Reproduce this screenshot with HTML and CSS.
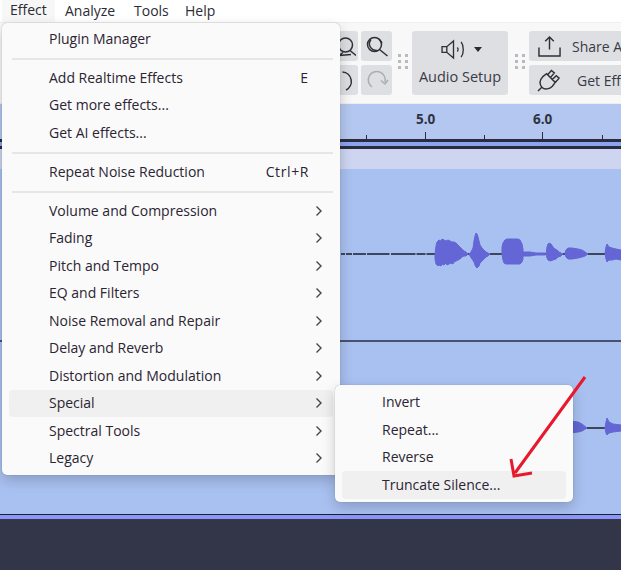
FILE: index.html
```html
<!DOCTYPE html>
<html lang="en">
<head>
<meta charset="utf-8">
<title>Effect menu</title>
<link rel="stylesheet" href="styles.css">
</head>
<body>
<div class="app">
  <nav class="menubar">
    <span class="top-item active">Effect</span>
    <span class="top-item">Analyze</span>
    <span class="top-item">Tools</span>
    <span class="top-item">Help</span>
  </nav>

  <div class="toolbar">
    <div class="tool-grid">
      <div class="tool-btn">
        <svg viewBox="0 0 26 26" class="ico"><circle cx="15.500" cy="12" r="7"/><path d="M20 17.500l6 5M9 22.500l12-1M9 22.500l4-3"/></svg>
      </div>
      <div class="tool-btn">
        <svg viewBox="0 0 26 26" class="ico"><circle cx="10.500" cy="11.500" r="7"/><path d="M15.500 16.500l8 6.500M7 6.500c-4 5 0 11 6 11M18 10l-3-4"/></svg>
      </div>
      <div class="tool-btn">
        <svg viewBox="0 0 26 26" class="ico"><path d="M12.500 5A9.500 9.500 0 0 1 16 23"/></svg>
      </div>
      <div class="tool-btn">
        <svg viewBox="0 0 26 26" class="ico faint"><path d="M8 20A8.500 8.500 0 1 1 21 15M17 13.500l4 3.500 3-4"/></svg>
      </div>
    </div>
    <div class="grip"><i></i><i></i><i></i><i></i><i></i><i></i></div>
    <div class="audio-setup">
      <div class="audio-icons">
        <svg viewBox="0 0 28 22" class="speaker"><path d="M2 8h5l7-6v18l-7-6H2zM7 8v6"/><path d="M18 9c1 1 1 3 0 4M22 3c3 4 3 12 0 16"/></svg>
        <span class="caret"></span>
      </div>
      <span class="audio-label">Audio Setup</span>
    </div>
    <div class="grip second"><i></i><i></i><i></i><i></i><i></i><i></i></div>
    <div class="wide-stack">
      <div class="wide-btn">
        <svg viewBox="0 0 26 24" class="wide-ico"><path d="M13 15V2M8.500 6.500L13 2l4.500 4.500M2 13v9h22v-9"/></svg>
        <span class="wide-label share">Share Audio</span>
      </div>
      <div class="wide-btn">
        <svg viewBox="0 0 26 24" class="wide-ico"><path d="M1 23l4-4C2 15 3 11 6 8l4-3 9 9-3 4c-3 3-8 4-11 1M11 6l4-4.500 3 2.500-4 5M16 11l4-4 3 2.500-4 4.500"/></svg>
        <span class="wide-label effects">Get Effects</span>
      </div>
    </div>
  </div>

  <div class="ruler">
    <i class="tick minor t1"></i>
    <span class="ruler-num n5">5.0</span>
    <i class="tick t2"></i>
    <i class="tick minor t3"></i>
    <span class="ruler-num n6">6.0</span>
    <i class="tick t4"></i>
    <i class="tick minor t5"></i>
  </div>
  <div class="rule-gap"></div>
  <div class="rule-low"></div>
  <div class="band"></div>

  <div class="tracks">
    <div class="track upper">
      <svg class="wave" viewBox="0 0 621 171">
        <path class="base" d="M341 85H345M346 85H352M353 85H366M367 85H389.500M391 85H415.500M416.500 85H425.500M426.500 85H435M468 85H469M490 85H502M545 85H546M563 85H565M588 85H605"/>
        <path class="blob" d="M435 85L436 77 437 73 439 71 441 72 442 70 444 71 446 72 448 71 450 72 452 73 454 73 456 74 458 76 460 78 462 80 464 82 466 83 468 85 466 87 464 87 462 88 460 90 458 91 456 92 454 93 453 95 451 94 449 95 447 96 446 94 444 96 442 95 441 97 439 96 438 97 436 95 435 90z"/>
        <path class="blob" d="M469 85L471 83 473 79 474 72 475 67 476 64 477 65 478 68 479 72 480 76 482 79 484 81 486 83 488 84 490 85 488 87 486 88 484 90 482 92 480 94 479 97 477 99 476 98 475 96 474 93 472 90 470 87z"/>
        <path class="blob" d="M502 85L502 78 503 74 505 71 507 70 518 70 520 71 522 75 523 80 523 90 522 93 520 95 506 95 504 94 503 91z"/>
        <path class="blob" d="M523 83L530 83 536 84 545 84 545 86 536 86 530 87 523 87z"/>
        <path class="blob" d="M546 85L547 78 548 75 549 74 551 75 553 78 555 80 557 81 559 83 561 84 563 85 561 87 558 88 556 90 553 91 550 92 548 91 547 89z"/>
        <path class="blob" d="M565 84L566 81 568 79 572 79 578 80 582 81 585 83 588 85 585 87 582 88 578 89 572 90 568 90 566 88z"/>
        <path class="blob" d="M605 84L606 78 607 75 609 78 612 79 616 80 621 81 621 91 616 90 612 91 609 91 607 93 606 90z"/>
      </svg>
    </div>
    <div class="track lower">
      <svg class="wave" viewBox="0 0 621 172">
        <path class="base" d="M587 86H605"/>
        <path class="blob" d="M570 79L578 80 582 82 587 86 582 89 578 90 570 91z"/>
        <path class="blob" d="M605 86L606 80 607 76 609 80 613 82 621 83 621 89 613 90 609 91 607 93 606 91z"/>
      </svg>
    </div>
  </div>
  <div class="track-end"></div>
  <div class="footer"></div>

  <div class="menu main-menu">
    <div class="item">Plugin Manager</div>
    <div class="sep"></div>
    <div class="item">Add Realtime Effects<span class="key key-e">E</span></div>
    <div class="item">Get more effects...</div>
    <div class="item">Get AI effects...</div>
    <div class="sep"></div>
    <div class="item">Repeat Noise Reduction<span class="key">Ctrl+R</span></div>
    <div class="sep"></div>
    <div class="item">Volume and Compression<svg class="chev" viewBox="0 0 8 12"><path d="M1.500 1.500L6 6l-4.500 4.500"/></svg></div>
    <div class="item">Fading<svg class="chev" viewBox="0 0 8 12"><path d="M1.500 1.500L6 6l-4.500 4.500"/></svg></div>
    <div class="item">Pitch and Tempo<svg class="chev" viewBox="0 0 8 12"><path d="M1.500 1.500L6 6l-4.500 4.500"/></svg></div>
    <div class="item">EQ and Filters<svg class="chev" viewBox="0 0 8 12"><path d="M1.500 1.500L6 6l-4.500 4.500"/></svg></div>
    <div class="item">Noise Removal and Repair<svg class="chev" viewBox="0 0 8 12"><path d="M1.500 1.500L6 6l-4.500 4.500"/></svg></div>
    <div class="item">Delay and Reverb<svg class="chev" viewBox="0 0 8 12"><path d="M1.500 1.500L6 6l-4.500 4.500"/></svg></div>
    <div class="item">Distortion and Modulation<svg class="chev" viewBox="0 0 8 12"><path d="M1.500 1.500L6 6l-4.500 4.500"/></svg></div>
    <div class="item hot">Special<svg class="chev" viewBox="0 0 8 12"><path d="M1.500 1.500L6 6l-4.500 4.500"/></svg></div>
    <div class="item">Spectral Tools<svg class="chev" viewBox="0 0 8 12"><path d="M1.500 1.500L6 6l-4.500 4.500"/></svg></div>
    <div class="item">Legacy<svg class="chev" viewBox="0 0 8 12"><path d="M1.500 1.500L6 6l-4.500 4.500"/></svg></div>
  </div>

  <div class="menu sub-menu">
    <div class="item">Invert</div>
    <div class="item">Repeat...</div>
    <div class="item">Reverse</div>
    <div class="item hot">Truncate Silence...</div>
  </div>

  <svg class="arrow" viewBox="0 0 621 570"><path d="M585 377L515 473M511 459L514 476 532 473"/></svg>
</div>
</body>
</html>
```
FILE: styles.css
```css
* { box-sizing: border-box; }
html, body { margin: 0; padding: 0; }
body {
  width: 621px;
  height: 570px;
  overflow: hidden;
  font-family: "Open Sans", "Noto Sans", "Liberation Sans", sans-serif;
  font-size: 14px;
  color: #2b2b33;
  background: #fff;
}
.app { position: relative; width: 621px; height: 570px; overflow: hidden; }

.menubar { display: flex; height: 22px; background: #fff; align-items: center; padding-left: 2px; }
.top-item { padding: 0 8px; line-height: 20px; margin-right: -1px; }
.top-item.active { background: #f7f7f7; height: 22px; width: 53px; margin-right: 2px; }
.top-item:nth-child(2) { width: 70px; }
.top-item:nth-child(3) { width: 52px; }

.toolbar {
  height: 82px;
  display: flex;
  align-items: flex-start;
  padding: 8px 0 0 327px;
  background: #f8f8f9;
  border-top: 1px solid #efeff0;
  border-bottom: 1px solid #eeeeef;
}
.tool-grid { flex: none; display: grid; grid-template-columns: 31px 31px; grid-auto-rows: 30px; gap: 4px 3px; }
.tool-btn { background: #dedfe3; border-radius: 3px; display: flex; align-items: center; justify-content: center; }
.ico { width: 26px; height: 26px; fill: none; stroke: #2f2f36; stroke-width: 1.5; }
.ico.faint { stroke: #a9afb0; }
.grip { flex: none; width: 10px; height: 15px; margin: 23px 4px 0 6px; display: grid; grid-template-columns: 3px 3px; gap: 3px 4px; align-content: start; }
.grip.second { margin-left: 7px; }
.grip i { width: 3px; height: 3px; background: #b9bac0; }

.audio-setup {
  flex: none;
  width: 96px;
  height: 64px;
  background: #dedfe3;
  border-radius: 3px;
  display: flex;
  flex-direction: column;
  align-items: center;
  padding-top: 7px;
}
.audio-icons { display: flex; align-items: center; gap: 7px; height: 22px; margin-left: 2px; }
.speaker { width: 27px; height: 21px; fill: none; stroke: #2f2f36; stroke-width: 1.4; }
.caret { width: 0; height: 0; border-left: 4px solid transparent; border-right: 4px solid transparent; border-top: 5px solid #2b2b33; }
.audio-label { margin-top: 7px; font-size: 14.500px; line-height: 20px; color: #3a3a45; white-space: nowrap; }

.wide-stack { display: flex; flex-direction: column; gap: 4px; flex: none; width: 120px; }
.wide-btn { height: 30px; background: #dedfe3; border-radius: 3px; display: flex; align-items: center; padding-left: 8px; }
.wide-ico { width: 25px; height: 23px; fill: none; stroke: #2f2f36; stroke-width: 1.5; flex: none; }
.wide-label { white-space: nowrap; color: #3a3a45; line-height: 18px; padding-top: 2px; }
.wide-label.share { margin-left: 10px; }
.wide-label.effects { margin-left: 15px; }

.ruler { position: relative; height: 35px; background: #b4c7f0; }
.ruler-num { position: absolute; top: 6px; font-size: 13.500px; line-height: 18px; font-weight: 700; color: #2e3342; }
.n5 { left: 416px; }
.n6 { left: 533px; }
.tick { position: absolute; bottom: 0; width: 1px; height: 7px; background: #2c2e40; }
.tick.minor { height: 4px; }
.t1 { left: 366px; }
.t2 { left: 425px; }
.t3 { left: 484px; }
.t4 { left: 542px; }
.t5 { left: 602px; }

.rule-gap { height: 3px; background: #2a2c40; }
.rule-low { height: 7px; background: #8ca4f0; border-bottom: 3px solid #2a2c40; }
.band { height: 20px; background: #cdd5f0; }

.tracks { height: 345px; display: flex; flex-direction: column; background: #a9c1f1; }
.track { position: relative; }
.track.upper { height: 173px; border-bottom: 2px solid #4a5070; }
.track.lower { height: 172px; }
.wave { position: absolute; left: 0; top: 0; width: 621px; height: 171px; }
.lower .wave { height: 172px; }
.base { fill: none; stroke: #1c1c2a; stroke-width: 1.500; }
.blob { fill: #6366d4; stroke: #6366d4; stroke-width: 1; }
.track-end { height: 5px; background: #8a96f8; border-top: 1px solid #1e2030; }
.footer { height: 51px; background: #333548; }

.menu {
  position: absolute;
  background: #fafafa;
  border-radius: 5px;
  box-shadow: 0 0 1px rgba(0, 0, 0, .35), 0 5px 14px rgba(0, 0, 0, .2);
  display: flex;
  flex-direction: column;
  color: #2b2433;
}
.main-menu { left: 2px; top: 23px; width: 338px; height: 452px; padding: 2px 7px; }
.sub-menu { left: 335px; top: 385px; width: 238px; height: 117px; padding: 3.500px 7px; }
.item {
  height: 27.500px;
  flex: none;
  display: flex;
  align-items: center;
  position: relative;
  padding-left: 40px;
  border-radius: 4px;
  white-space: nowrap;
  line-height: 20px;
}
.item.hot { background: #f0f0f0; }
.sep { height: 11.500px; flex: none; position: relative; }
.sep::before { content: ""; position: absolute; left: 3px; right: 0; top: 5px; height: 2px; background: #e6e6e6; }
.key { margin-left: auto; margin-right: 24px; letter-spacing: .6px; }
.key-e { margin-right: 25px; letter-spacing: 0; }
.chev { margin-left: auto; margin-right: 10px; width: 8px; height: 12px; fill: none; stroke: #45454d; stroke-width: 1.400; }
.arrow { position: absolute; inset: 0; width: 621px; height: 570px; fill: none; stroke: #e8192c; stroke-width: 3; pointer-events: none; }
```
